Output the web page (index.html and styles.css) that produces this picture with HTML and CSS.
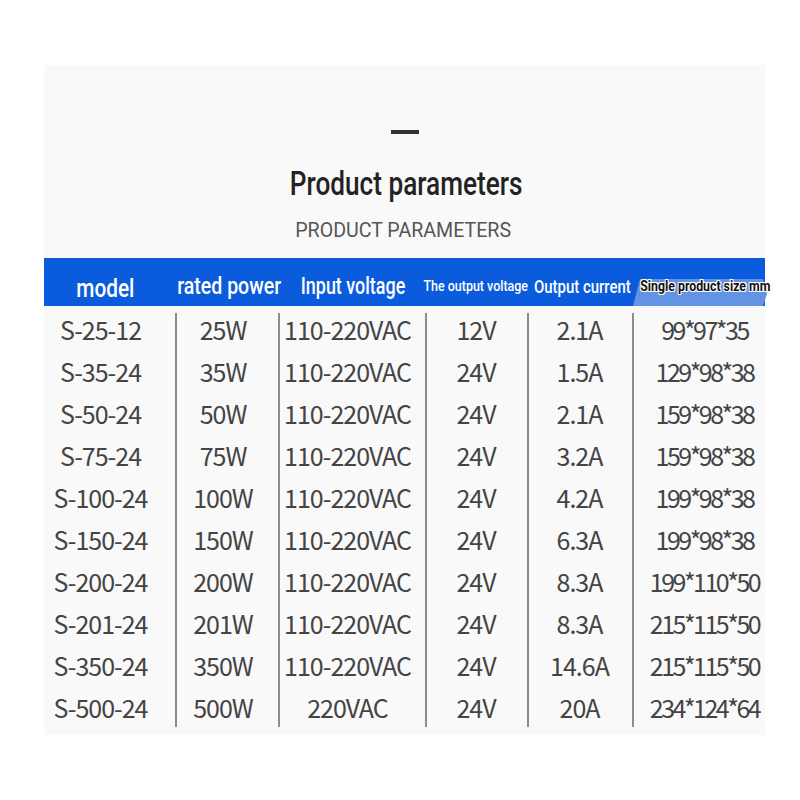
FILE: index.html
```html
<!DOCTYPE html>
<html>
<head>
<meta charset="utf-8">
<link rel="stylesheet" href="styles.css">
</head>
<body>
<div class="panel">
  <div class="dash"></div>
  <h1 class="title"><span>Product parameters</span></h1>
  <p class="subtitle"><span>PRODUCT PARAMETERS</span></p>
  <div class="thead">
    <div class="th"><span class="lbl l1">model</span></div>
    <div class="th"><span class="lbl l2">rated power</span></div>
    <div class="th"><span class="lbl l3">Input voltage</span></div>
    <div class="th"><span class="lbl l4">The output voltage</span></div>
    <div class="th"><span class="lbl l5">Output current</span></div>
    <div class="th last"><span class="lbl l6">Single product size mm</span></div>
  </div>
  <div class="tbody">
    <div class="row"><div class="td c1">S-25-12</div><div class="td c2">25W</div><div class="td c3">110-220VAC</div><div class="td c4">12V</div><div class="td c5">2.1A</div><div class="td c6">99*97*35</div></div>
    <div class="row"><div class="td c1">S-35-24</div><div class="td c2">35W</div><div class="td c3">110-220VAC</div><div class="td c4">24V</div><div class="td c5">1.5A</div><div class="td c6">129*98*38</div></div>
    <div class="row"><div class="td c1">S-50-24</div><div class="td c2">50W</div><div class="td c3">110-220VAC</div><div class="td c4">24V</div><div class="td c5">2.1A</div><div class="td c6">159*98*38</div></div>
    <div class="row"><div class="td c1">S-75-24</div><div class="td c2">75W</div><div class="td c3">110-220VAC</div><div class="td c4">24V</div><div class="td c5">3.2A</div><div class="td c6">159*98*38</div></div>
    <div class="row"><div class="td c1">S-100-24</div><div class="td c2">100W</div><div class="td c3">110-220VAC</div><div class="td c4">24V</div><div class="td c5">4.2A</div><div class="td c6">199*98*38</div></div>
    <div class="row"><div class="td c1">S-150-24</div><div class="td c2">150W</div><div class="td c3">110-220VAC</div><div class="td c4">24V</div><div class="td c5">6.3A</div><div class="td c6">199*98*38</div></div>
    <div class="row"><div class="td c1">S-200-24</div><div class="td c2">200W</div><div class="td c3">110-220VAC</div><div class="td c4">24V</div><div class="td c5">8.3A</div><div class="td c6">199*110*50</div></div>
    <div class="row"><div class="td c1">S-201-24</div><div class="td c2">201W</div><div class="td c3">110-220VAC</div><div class="td c4">24V</div><div class="td c5">8.3A</div><div class="td c6">215*115*50</div></div>
    <div class="row"><div class="td c1">S-350-24</div><div class="td c2">350W</div><div class="td c3">110-220VAC</div><div class="td c4">24V</div><div class="td c5">14.6A</div><div class="td c6">215*115*50</div></div>
    <div class="row"><div class="td c1">S-500-24</div><div class="td c2">500W</div><div class="td c3">220VAC</div><div class="td c4">24V</div><div class="td c5">20A</div><div class="td c6">234*124*64</div></div>
  </div>
</div>
</body>
</html>
```

FILE: styles.css
```css
body {
  margin: 0;
  background: #ffffff;
}

.panel {
  margin: 65px 0 0 44px;
  width: 721px;
  height: 670px;
  background: #f9f9f9;
  display: flex;
  flex-direction: column;
}

.dash {
  width: 28px;
  height: 4px;
  background: #333333;
  margin: 65px auto 0;
}

.title {
  margin: 29px 0 0;
  height: 40px;
  font: 500 34px/40px Roboto, sans-serif;
  color: #222222;
  text-align: center;
}

.title span {
  display: inline-block;
  transform: translateX(2px) scaleX(0.77);
}

.subtitle {
  margin: 15px 0 0;
  height: 24px;
  font: 400 20px/24px Roboto, sans-serif;
  color: #555555;
  text-align: center;
}

.subtitle span {
  display: inline-block;
  transform: translateX(-1px) scaleX(0.98);
}

.thead {
  margin-top: 16px;
  height: 48px;
  background: #0b5cdc;
  display: grid;
  grid-template-columns: 131px 103px 147px 102px 105px 133px;
}

.th {
  position: relative;
  display: flex;
  align-items: center;
  justify-content: center;
  white-space: nowrap;
  color: #ffffff;
  font-family: Roboto, sans-serif;
  font-weight: 500;
}

.th.last::before {
  content: "";
  position: absolute;
  left: 0;
  top: 0;
  width: 140px;
  height: 48px;
  background: #6393e4;
  clip-path: polygon(8px 21px, 131px 21px, 135px 36px, 131px 48px, 1px 48px);
}

.lbl {
  position: relative;
  display: inline-block;
}

.l1 { font-size: 26px; transform: translate(-4px, 6px) scaleX(0.8); }
.l2 { font-size: 23px; transform: translate(3px, 4px) scaleX(0.85); }
.l3 { font-size: 23px; transform: translate(1px, 4px) scaleX(0.78); }
.l4 { font-size: 14px; transform: translate(0, 4px) scaleX(0.89); }
.l5 { font-size: 18px; transform: translate(3px, 4px) scaleX(0.83); }

.l6 {
  font-size: 15px;
  font-weight: 700;
  color: #111111;
  transform: translate(7px, 4px) scaleX(0.82);
  text-shadow:
    1px 0 0 #fff, -1px 0 0 #fff, 0 1px 0 #fff, 0 -1px 0 #fff,
    1px 1px 0 #fff, -1px -1px 0 #fff, 1px -1px 0 #fff, -1px 1px 0 #fff;
}

.tbody {
  margin-top: 2px;
  display: flex;
  flex-direction: column;
}

.row {
  height: 42px;
  display: grid;
  grid-template-columns: 131px 103px 147px 102px 105px 133px;
}

.td {
  display: flex;
  align-items: center;
  justify-content: center;
  white-space: nowrap;
  font: 400 25px/42px "Noto Sans CJK SC", sans-serif;
  letter-spacing: -1px;
  color: #444444;
  background-image: linear-gradient(#8c8c8c, #8c8c8c);
  background-repeat: no-repeat;
  background-size: 2px 100%;
  background-position: left top;
}

.row:first-child .td {
  background-size: 2px 37px;
  background-position: left bottom;
}

.row:last-child .td {
  background-size: 2px 41px;
  background-position: left top;
}

.td.c1 {
  background-image: none;
  padding-right: 18px;
}

.td.c2 { padding-right: 7px; }
.td.c3 { padding-right: 8px; }
.td.c6 {
  padding-left: 12px;
  letter-spacing: -2.5px;
}
```
